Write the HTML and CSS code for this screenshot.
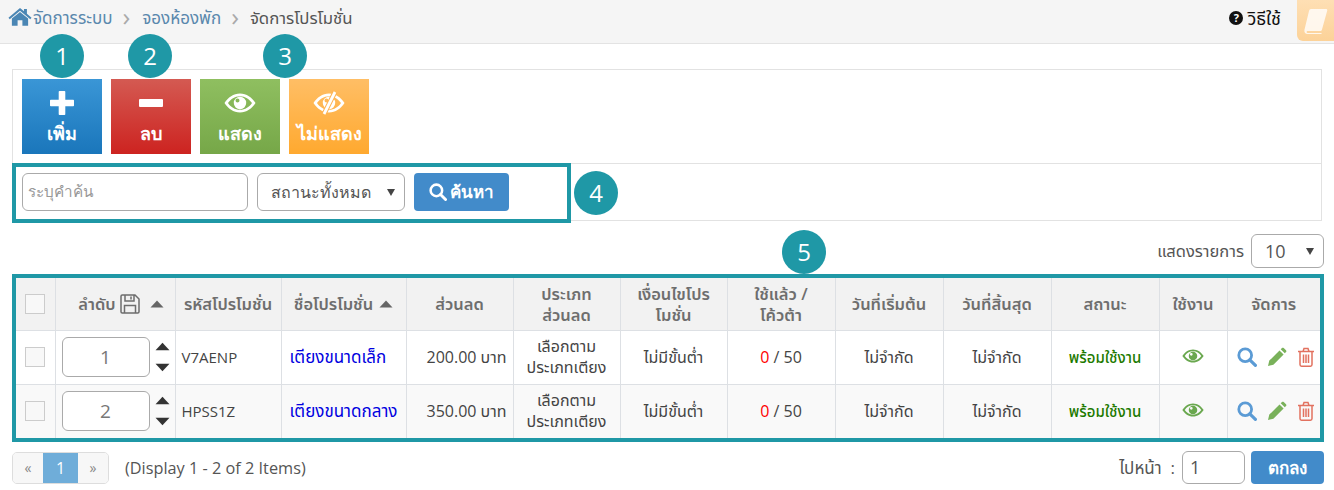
FILE: index.html
```html
<!DOCTYPE html>
<html lang="th">
<head>
<meta charset="utf-8">
<title>จัดการโปรโมชั่น</title>
<link rel="stylesheet" href="styles.css">
</head>
<body>
<svg class="defs" width="0" height="0" aria-hidden="true">
  <symbol id="i-eye" viewBox="0 0 32 20"><path fill="currentColor" fill-rule="evenodd" d="M16 .5C9.500 .5 4 4.500 .5 10 4 15.500 9.500 19.500 16 19.500S28 15.500 31.500 10C28 4.500 22.500 .5 16 .5zM16 3.200C10.800 3.200 6.500 6.200 4 10 6.500 13.800 10.800 16.800 16 16.800S25.500 13.800 28 10C25.500 6.200 21.200 3.200 16 3.200zM16 3.800a6.200 6.200 0 1 1 0 12.400 6.200 6.200 0 0 1 0-12.400zM13.500 5.500a2 2 0 1 0 0 4 2 2 0 0 0 0-4z"/></symbol>
  <symbol id="i-search" viewBox="0 0 20 20"><circle cx="8.200" cy="8.200" r="6.400" fill="none" stroke="currentColor" stroke-width="2.800"/><path d="M12.800 12.800l5.600 5.600" stroke="currentColor" stroke-width="3.200" stroke-linecap="round"/></symbol>
  <symbol id="i-pencil" viewBox="0 0 20 20"><path fill="currentColor" d="M1 19l1.300-5.400L12.500 3.400l4.100 4.100L6.400 17.700zM13.700 2.200l1.300-1.200c.5-.5 1.200-.5 1.700 0l2.300 2.300c.5.500.5 1.200 0 1.700l-1.200 1.300z"/></symbol>
  <symbol id="i-trash" viewBox="0 0 18 20"><path fill="none" stroke="currentColor" stroke-width="1.500" d="M1 4.500h16M3 4.500V17.500c0 1 .6 1.700 1.500 1.700h9c.9 0 1.500-.7 1.500-1.700V4.500M6 4.500L7 1.500h4l1 3M6.500 7.500v8.500M9 7.500v8.500M11.500 7.500v8.500"/></symbol>
  <symbol id="i-up" viewBox="0 0 14 8"><path fill="currentColor" d="M7 0.500L13.500 7.500H.5z"/></symbol>
  <symbol id="i-down" viewBox="0 0 14 8"><path fill="currentColor" d="M7 7.500L.5 .5H13.500z"/></symbol>
</svg>

<header class="topbar">
  <nav class="crumbs">
    <svg class="home" viewBox="0 0 26 20"><path fill="currentColor" d="M13 .8l4.300 3.600V1.800h3.200v5.300L25.500 11.300l-1.400 1.600L13 3.700 1.900 12.900.5 11.300zM4.200 12.300L13 5l8.800 7.300V20h-6.200v-6h-5.200v6H4.200z"/></svg>
    <a class="crumb">จัดการระบบ</a>
    <span class="sep">&#8250;</span>
    <a class="crumb">จองห้องพัก</a>
    <span class="sep">&#8250;</span>
    <span class="crumb-now">จัดการโปรโมชั่น</span>
  </nav>
  <div class="help">
    <span class="help-mark">?</span>
    <span>วิธีใช้</span>
  </div>
  <div class="book-tab">
    <svg class="book" viewBox="0 0 24 26"><path fill="#fff" fill-opacity=".8" d="M7 1h15c1 0 1.500.7 1.200 1.700L18 21.500c-.3 1-1 1.500-2 1.500H4c-1 0-1.500.5-1.300 1.200.2.700 1 .8 2 .8h13l-.3 1H3.500C1.500 26 0 24.500.4 22L5 3c.3-1.200 1-2 2-2z"/></svg>
  </div>
</header>

<main class="content">
  <section class="panel">
    <div class="toolbar">
      <button class="tool tool-blue"><svg class="tool-icon" viewBox="0 0 24 24"><path fill="#fff" d="M9.500 0h5c.5 0 .8.300.8.800V8.700h7.900c.5 0 .8.300.8.800v5c0 .5-.3.800-.8.800h-7.900v7.900c0 .5-.3.800-.8.800h-5c-.5 0-.8-.3-.8-.8v-7.900H.8c-.5 0-.8-.3-.8-.8v-5c0-.5.300-.8.800-.8h7.900V.8c0-.5.300-.8.800-.8z"/></svg><span>เพิ่ม</span></button>
      <button class="tool tool-red"><svg class="tool-icon" viewBox="0 0 24 24"><rect y="8" width="24" height="8" rx="1" fill="#fff"/></svg><span>ลบ</span></button>
      <button class="tool tool-green"><svg class="tool-icon eye-wide" viewBox="0 0 32 24"><use href="#i-eye" y="2" width="32" height="20"/></svg><span>แสดง</span></button>
      <button class="tool tool-orange"><svg class="tool-icon eye-wide" viewBox="0 0 32 24"><use href="#i-eye" y="2" width="32" height="20"/><path stroke="#ffb452" stroke-width="5" d="M22 1L11 23"/><path stroke="#fff" stroke-width="2.800" d="M22 1L11 23"/></svg><span>ไม่แสดง</span></button>
    </div>
    <form class="filters">
      <input class="field search-field" type="text" placeholder="ระบุคำค้น">
      <div class="field status-field"><span>สถานะทั้งหมด</span><i class="select-caret"></i></div>
      <button type="button" class="search-btn"><svg class="search-icon"><use href="#i-search"/></svg><span>ค้นหา</span></button>
    </form>
  </section>

  <div class="page-size">
    <span>แสดงรายการ</span>
    <div class="field size-field"><span>10</span><i class="select-caret"></i></div>
  </div>

  <div class="table-frame">
    <table class="grid">
      <colgroup>
        <col class="c1"><col class="c2"><col class="c3"><col class="c4"><col class="c5"><col class="c6"><col class="c7"><col class="c8"><col class="c9"><col class="c10"><col class="c11"><col class="c12"><col class="c13">
      </colgroup>
      <thead>
        <tr>
          <th><span class="check"></span></th>
          <th><span class="order-head"><span>ลำดับ</span>
            <svg class="save" viewBox="0 0 20 20"><path fill="none" stroke="currentColor" stroke-width="1.500" d="M1 2.200C1 1.500 1.500 1 2.200 1H15l4 4v12.800c0 .7-.5 1.200-1.200 1.200H2.200C1.500 19 1 18.500 1 17.800zM5 1v6h9V1M11 2.500v3M4.500 19v-7.500h11V19"/></svg>
            <svg class="sort sort-far"><use href="#i-up"/></svg></span></th>
          <th>รหัสโปรโมชั่น</th>
          <th><span class="name-head">ชื่อโปรโมชั่น<svg class="sort"><use href="#i-up"/></svg></span></th>
          <th>ส่วนลด</th>
          <th>ประเภท<br>ส่วนลด</th>
          <th>เงื่อนไขโปร<br>โมชั่น</th>
          <th>ใช้แล้ว /<br>โค้วต้า</th>
          <th>วันที่เริ่มต้น</th>
          <th>วันที่สิ้นสุด</th>
          <th>สถานะ</th>
          <th>ใช้งาน</th>
          <th>จัดการ</th>
        </tr>
      </thead>
      <tbody>
        <tr>
          <td><span class="check"></span></td>
          <td><div class="order-cell"><div class="field order-field">1</div><div class="arrows"><svg class="arrow"><use href="#i-up"/></svg><svg class="arrow"><use href="#i-down"/></svg></div></div></td>
          <td class="left code">V7AENP</td>
          <td class="left promo-cell"><a class="promo">เตียงขนาดเล็ก</a></td>
          <td class="right">200.00 บาท</td>
          <td>เลือกตาม<br>ประเภทเตียง</td>
          <td>ไม่มีขั้นต่ำ</td>
          <td class="quota"><span class="used">0</span> / 50</td>
          <td>ไม่จำกัด</td>
          <td>ไม่จำกัด</td>
          <td class="ready">พร้อมใช้งาน</td>
          <td><svg class="eye-on"><use href="#i-eye"/></svg></td>
          <td><div class="actions"><svg class="a-search"><use href="#i-search"/></svg><svg class="a-pencil"><use href="#i-pencil"/></svg><svg class="a-trash"><use href="#i-trash"/></svg></div></td>
        </tr>
        <tr>
          <td><span class="check"></span></td>
          <td><div class="order-cell"><div class="field order-field">2</div><div class="arrows"><svg class="arrow"><use href="#i-up"/></svg><svg class="arrow"><use href="#i-down"/></svg></div></div></td>
          <td class="left code">HPSS1Z</td>
          <td class="left promo-cell"><a class="promo">เตียงขนาดกลาง</a></td>
          <td class="right">350.00 บาท</td>
          <td>เลือกตาม<br>ประเภทเตียง</td>
          <td>ไม่มีขั้นต่ำ</td>
          <td class="quota"><span class="used">0</span> / 50</td>
          <td>ไม่จำกัด</td>
          <td>ไม่จำกัด</td>
          <td class="ready">พร้อมใช้งาน</td>
          <td><svg class="eye-on"><use href="#i-eye"/></svg></td>
          <td><div class="actions"><svg class="a-search"><use href="#i-search"/></svg><svg class="a-pencil"><use href="#i-pencil"/></svg><svg class="a-trash"><use href="#i-trash"/></svg></div></td>
        </tr>
      </tbody>
    </table>
  </div>

  <footer class="pager-row">
    <div class="pager"><span class="pg">«</span><span class="pg pg-on">1</span><span class="pg">»</span></div>
    <span class="summary">(Display 1 - 2 of 2 Items)</span>
    <div class="goto">
      <span class="goto-label">ไปหน้า &nbsp;:</span>
      <div class="field goto-field">1</div>
      <button class="go-btn">ตกลง</button>
    </div>
  </footer>
</main>

<div class="search-outline"></div>
<span class="badge b1">1</span>
<span class="badge b2">2</span>
<span class="badge b3">3</span>
<span class="badge b4">4</span>
<span class="badge b5">5</span>
</body>
</html>
```

FILE: styles.css
```css
* { box-sizing: border-box; }
html, body { margin: 0; padding: 0; }
body {
  position: relative;
  width: 1334px;
  height: 490px;
  overflow: hidden;
  background: #fff;
  color: #555;
  font: 14px/20px "Open Sans", "Noto Sans", "Noto Sans Thai", sans-serif;
}
.defs { position: absolute; }

.topbar {
  display: flex;
  align-items: flex-start;
  height: 44px;
  background: #f5f5f5;
  border-bottom: 1px solid #e3e3e3;
}
.crumbs { display: flex; align-items: center; height: 36px; padding-left: 8px; flex: 1; font-size: 17px; }
.home { width: 24px; height: 19px; color: #4a86b4; margin-right: 1px; margin-top: -3px; }
.crumb { color: #5a88ad; }
.sep { color: #aaa; font-size: 26px; margin: -4px 12px 0 10px; }
.crumb-now { color: #555; margin-left: -1px; font-size: 16.800px; }
.help { display: flex; align-items: center; gap: 4px; height: 36px; margin-right: 16px; color: #111; font-size: 18px; }
.help-mark {
  display: inline-flex; align-items: center; justify-content: center;
  width: 14px; height: 14px; border-radius: 50%;
  background: #111; color: #fff; font-size: 11px; font-weight: 700;
}
.book-tab {
  width: 37px; height: 41px;
  background: linear-gradient(#fedfb4, #fcd298);
  border-bottom-left-radius: 6px;
  display: flex; align-items: center; justify-content: center;
}
.book { width: 24px; height: 26px; }

.content { padding: 25px 10px 0 12px; }
.panel { border: 1px solid #e2e2e2; margin-right: 2px; }
.toolbar { display: flex; gap: 9px; padding: 9px; height: 93px; }
.tool {
  display: flex; flex-direction: column; align-items: center; justify-content: flex-start;
  width: 80px; height: 75px; padding: 12px 0 0; border: 0;
  color: #fff; font: 700 18px/22px "Open Sans", "Noto Sans", sans-serif;
}
.tool-icon { width: 24px; height: 24px; margin-bottom: 7px; }
.eye-wide { width: 32px; }
.tool-blue { background: linear-gradient(#3a96d6, #1a76bb); }
.tool-red { background: linear-gradient(#d45a52, #cd2320); }
.tool-green { background: linear-gradient(#8fbf60, #76a748); }
.tool-orange { background: linear-gradient(#ffbe65, #ffa92f); }

.filters {
  display: flex; gap: 9px; align-items: center;
  height: 57px; padding: 0 9px;
  border-top: 1px solid #e2e2e2;
}
.field {
  border: 1px solid #aaa; border-radius: 6px; background: #fff;
  color: #555; font: 16px/20px "Open Sans", "Noto Sans", sans-serif;
}
.search-field { width: 226px; height: 38px; padding: 0 5px 2px; outline: 0; font-size: 15.300px; }
.search-field::placeholder { color: #999; }
.status-field { position: relative; display: flex; align-items: center; width: 148px; height: 38px; padding-left: 13px; }
.select-caret {
  position: absolute; right: 9px; top: 50%; margin-top: -3px;
  border: 4px solid transparent; border-top: 7px solid #444; border-bottom: 0;
}
.search-btn {
  display: flex; align-items: center; justify-content: center; gap: 3px;
  width: 95px; height: 38px; border: 0; border-radius: 4px;
  background: #428bca; color: #fff;
  font: 700 17px/20px "Open Sans", "Noto Sans", sans-serif;
}
.search-icon { width: 18px; height: 18px; }

.page-size { display: flex; justify-content: flex-end; align-items: center; gap: 7px; height: 34px; margin: 13px 0 6px; font-size: 16.500px; }
.size-field { position: relative; display: flex; align-items: center; width: 73px; height: 34px; padding-left: 13px; font-size: 18px; }

.table-frame { border: 4px solid #1f98a6; }
.grid { width: 1304px; table-layout: fixed; border-collapse: collapse; }
.c1 { width: 39px; } .c2 { width: 120px; } .c3 { width: 106px; } .c4 { width: 125px; }
.c5 { width: 107px; } .c6 { width: 107px; } .c7 { width: 107px; } .c8 { width: 108px; }
.c9 { width: 108px; } .c10 { width: 108px; } .c11 { width: 108px; } .c12 { width: 68px; } .c13 { width: 93px; }
.grid th, .grid td { border: 1px solid #dde0e4; text-align: center; padding: 0 3px; }
.grid tr > :first-child { border-left: 0; }
.grid tr > :last-child { border-right: 0; }
.grid thead tr:first-child th { border-top: 0; }
.grid tbody tr:last-child td { border-bottom: 0; }
.grid th { height: 52px; background: #f2f2f2; color: #6e6e6e; font-weight: 600; font-size: 16.500px; line-height: 21px; white-space: nowrap; }
.grid td { height: 54px; color: #444; font-size: 16px; line-height: 21px; white-space: nowrap; }
.grid tbody tr:nth-child(2) td { background: #f9f9f9; }
.grid td.left { text-align: left; padding-left: 6px; }
.grid td.promo-cell { padding-left: 8px; }
.grid td.right { text-align: right; padding-right: 6px; }
.grid td.code { font-size: 15px; }
.check { display: block; width: 20px; height: 20px; margin: 0 auto; border: 1px solid #ccc; background: #f8f8f8; }
.order-head, .name-head { display: inline-flex; align-items: center; justify-content: center; gap: 4px; }
.order-head { padding-left: 12px; }
.save { width: 20px; height: 20px; }
.sort { width: 14px; height: 8px; color: #666; margin-left: 2px; }
.sort-far { margin-left: 6px; }
.order-cell { display: flex; align-items: center; gap: 5px; padding-left: 3px; }
.order-field { width: 88px; height: 40px; line-height: 38px; color: #777; font-size: 19px; }
.arrows { display: flex; flex-direction: column; gap: 12px; }
.arrow { display: block; width: 15px; height: 9px; color: #333; }
.promo { color: #0000e0; font-size: 17px; }
.used { color: #f00; }
.grid td.ready { color: #1d7a00; font-weight: 500; font-size: 15px; }
.eye-on { width: 22px; height: 14px; color: #6aa84f; }
.actions { display: flex; align-items: center; justify-content: center; gap: 10px; padding-left: 4px; }
.a-search { width: 20px; height: 20px; color: #5b9bd5; }
.a-pencil { width: 20px; height: 20px; color: #79b15a; }
.a-trash { width: 18px; height: 20px; color: #e2715f; }

.pager-row { display: flex; align-items: center; margin-top: 9px; height: 33px; }
.pager { display: flex; height: 32px; border: 1px solid #ddd; border-radius: 5px; overflow: hidden; }
.pg { display: flex; align-items: center; justify-content: center; width: 30px; background: #f7f7f7; color: #888; }
.pg-on { width: 35px; background: #6fadd9; color: #fff; font-size: 16px; }
.summary { margin-left: 16px; font-size: 16.300px; }
.goto { display: flex; align-items: center; margin-left: auto; }
.goto-label { font-size: 17px; margin-right: 7px; }
.goto-field { width: 63px; height: 33px; padding-left: 7px; line-height: 31px; font-size: 18px; }
.go-btn {
  width: 73px; height: 33px; margin-left: 6px; border: 0; border-radius: 4px;
  background: #428bca; color: #fff; font: 700 17px/20px "Open Sans", "Noto Sans", sans-serif;
}

.search-outline { position: absolute; left: 12px; top: 163px; width: 559px; height: 60px; border: 4px solid #1f98a6; }
.badge {
  position: absolute; display: flex; align-items: center; justify-content: center;
  width: 44px; height: 44px; border-radius: 50%;
  background: #1f98a6; color: #fff; font-size: 24px;
}
.b1 { left: 40px; top: 34px; }
.b2 { left: 128px; top: 34px; }
.b3 { left: 263px; top: 34px; }
.b4 { left: 574px; top: 171px; }
.b5 { left: 782px; top: 230px; }
```
